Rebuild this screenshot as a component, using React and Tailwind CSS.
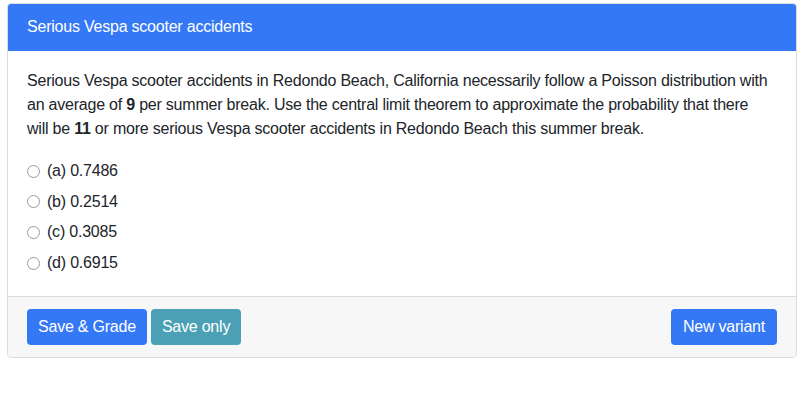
export default function App() {
  const options = [
    ["(a)", "0.7486"],
    ["(b)", "0.2514"],
    ["(c)", "0.3085"],
    ["(d)", "0.6915"],
  ];

  return (
    <div className="bg-white w-[806px] h-[416px] pt-[3px] pl-[7px] pr-[9px] font-['Liberation_Sans',sans-serif] text-[16px] tracking-[-0.22px] text-[#212529]">
      <div className="border border-[#dcdcdc] rounded-[4px] overflow-hidden">
        {/* header */}
        <div className="bg-[#3478f6] text-white px-[19px] pt-[11px] pb-[12px] leading-[24px]">
          Serious Vespa scooter accidents
        </div>

        {/* body */}
        <div className="px-[19px] pt-[18px] pb-[21px]">
          <p className="leading-[24px] mb-[16px]">
            Serious Vespa scooter accidents in Redondo Beach, California necessarily follow a Poisson distribution with
            an average of <b className="font-bold">9</b> per summer break. Use the central limit theorem to approximate the
            probability that there
            <br />
            will be <b className="font-bold">11</b> or more serious Vespa scooter accidents in Redondo Beach this summer
            break.
          </p>
          <div className="flex flex-col gap-[6.7px] pt-[2px]">
            {options.map(([k, v]) => (
              <label key={k} className="flex items-center leading-[24px]">
                <span className="w-[13px] h-[13px] rounded-full border border-[#9a9a9a] bg-white mr-[7px]" />
                <span>
                  {k} {v}
                </span>
              </label>
            ))}
          </div>
        </div>

        {/* footer */}
        <div className="bg-[#f7f7f7] border-t border-[#dcdcdc] px-[19px] py-[12px] flex items-center">
          <button className="bg-[#3478f6] text-white rounded-[4px] px-[11px] h-[36px] leading-[24px]">
            Save &amp; Grade
          </button>
          <button className="bg-[#4ba0b6] text-white rounded-[4px] px-[11px] h-[36px] leading-[24px] ml-[4px]">
            Save only
          </button>
          <button className="bg-[#3478f6] text-white rounded-[4px] px-[12px] h-[36px] leading-[24px] ml-auto">
            New variant
          </button>
        </div>
      </div>
    </div>
  );
}
